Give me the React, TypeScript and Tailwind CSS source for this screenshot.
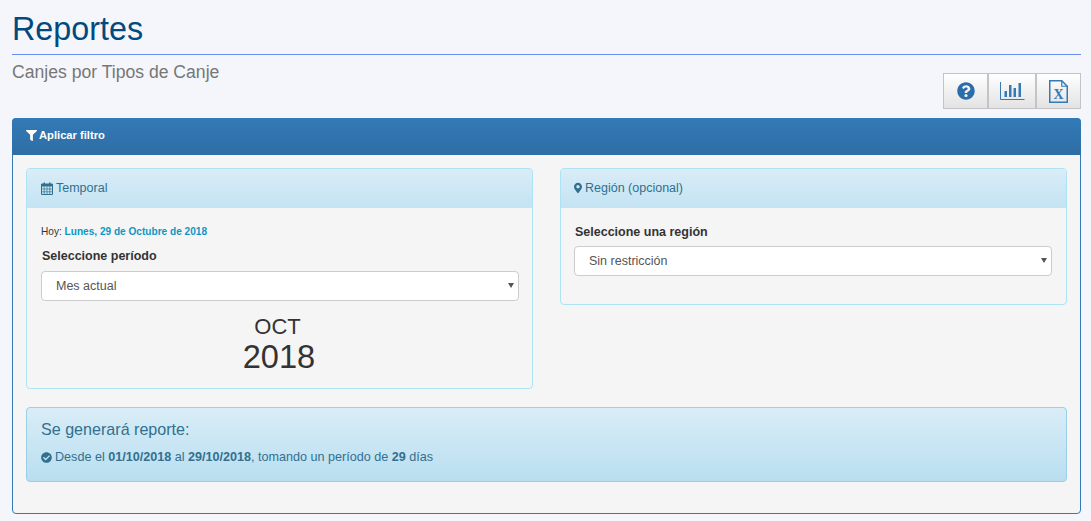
import { FaCheckCircle, FaFilter, FaMapMarkerAlt, FaQuestionCircle } from "react-icons/fa";

const ChartIcon = () => (
  <svg width="25" height="18" viewBox="0 0 25 18" fill="none" className="block">
    <path d="M0.5 0v17.5h24" stroke="#337ab7" strokeWidth="1" />
    <path d="M4.5 9h2.5v6H4.5zM9 3h2.5v12H9zM13.5 6h2.5v9h-2.5zM18.5 1h2.5v14h-2.5z" fill="#337ab7" />
  </svg>
);

const ExcelIcon = () => (
  <svg width="19" height="23" viewBox="0 0 19 23" fill="none" className="block">
    <path d="M0.75 0.75h12l5.5 5.5v16h-17.5z" stroke="#337ab7" strokeWidth="1.5" fill="none" />
    <path d="M12.75 0.75v5.5h5.5" stroke="#337ab7" strokeWidth="1.2" fill="none" />
    <text x="9.5" y="19" textAnchor="middle" fontSize="14" fontWeight="700" fontFamily="'Liberation Serif', serif" fill="#337ab7">X</text>
  </svg>
);

const CalendarIcon = () => (
  <svg width="12" height="13" viewBox="0 0 12 13" className="block">
    <path d="M0.5 2h11v10.5h-11z" fill="none" stroke="#31708f" />
    <path d="M0.5 2h11v2.5h-11z" fill="#31708f" />
    <path d="M2.5 0.5h1.5v2.5H2.5zM8 0.5h1.5v2.5H8z" fill="#31708f" />
    <path d="M0.5 7h11M0.5 9.8h11M3.2 4.5v8M6 4.5v8M8.8 4.5v8" stroke="#31708f" strokeWidth="0.7" />
  </svg>
);

const toolbarBtn =
  "flex items-center justify-center h-[36px] border border-[#c4c4c4] bg-gradient-to-b from-[#ffffff] to-[#e3e3e3]";

const subHeader =
  "flex items-center gap-[3px] h-[39px] text-[12.5px] text-[#31708f] rounded-t-[3px] bg-gradient-to-b from-[#d9edf7] to-[#c4e3f3] border-b border-[#bce8f1]";

const SelectBox = ({ value }: { value: string }) => (
  <div className="relative">
    <select
      defaultValue={value}
      className="block w-full h-[30px] pl-[14px] appearance-none text-[12.5px] text-[#555555] bg-white border border-[#cccccc] rounded-[4px] font-['Liberation_Sans',Arial,sans-serif]"
    >
      <option>{value}</option>
    </select>
    <span className="absolute right-[5px] top-[12px] border-x-[3px] border-t-[5px] border-x-transparent border-t-[#555555]" />
  </div>
);

export default function App() {
  return (
    <div className="min-h-[521px] bg-[#f4f6fb] pl-[12px] pr-[10px] font-['Liberation_Sans',Arial,sans-serif] text-[#333333]">
      <h1 className="pt-[11px] h-[54px] text-[32.3px] leading-[36px] text-[#024a7d]">Reportes</h1>
      <div className="h-px bg-[#6a8ff0]" />
      <div className="flex items-start justify-between h-[63px]">
        <h2 className="pt-[7px] text-[17.6px] leading-[20px] text-[#777777]">Canjes por Tipos de Canje</h2>
        <div className="flex mt-[18px]">
          <div className={`${toolbarBtn} w-[45px]`}>
            <FaQuestionCircle className="text-[18px] text-[#2a6da8]" />
          </div>
          <div className={`${toolbarBtn} w-[48px]`}>
            <ChartIcon />
          </div>
          <div className={`${toolbarBtn} w-[45px]`}>
            <ExcelIcon />
          </div>
        </div>
      </div>

      <div className="h-[396px] bg-[#f5f5f5] border border-[#337ab7] rounded-[4px]">
        <div className="flex items-center gap-[2px] h-[37px] pb-[2px] -mt-px -mx-px px-[14px] rounded-t-[4px] bg-gradient-to-b from-[#337ab7] to-[#2e6da4] text-[11.2px] font-bold text-white">
          <FaFilter className="text-[11px]" />
          <span>Aplicar filtro</span>
        </div>

        <div className="px-[13px] pt-[13px]">
          <div className="grid grid-cols-2 gap-[27px] items-start">
            <div className="h-[221px] border border-[#aee3f5] rounded-[4px]">
              <div className={`${subHeader} px-[14px]`}>
                <CalendarIcon />
                <span>Temporal</span>
              </div>
              <div className="pl-[14px] pr-[13px] pt-[18px]">
                <p className="text-[10.1px] leading-[12px] text-[#333333]">
                  Hoy: <span className="font-bold text-[#0e97c4]">Lunes, 29 de Octubre de 2018</span>
                </p>
                <label className="block mt-[11px] mb-[7px] pl-[1px] text-[12.5px] leading-[15px] font-bold">Seleccione período</label>
                <SelectBox value="Mes actual" />
                <div className="mt-[13px] pr-[2px] text-center">
                  <div className="pr-[3px] text-[22px] leading-[25px]">OCT</div>
                  <div className="text-[32.6px] leading-[36px]">2018</div>
                </div>
              </div>
            </div>

            <div className="h-[137px] border border-[#aee3f5] rounded-[4px]">
              <div className={`${subHeader} px-[13px]`}>
                <FaMapMarkerAlt className="w-[8px] h-[12px]" />
                <span>Región (opcional)</span>
              </div>
              <div className="pl-[13px] pr-[14px] pt-[17px]">
                <label className="block mb-[6px] pl-[1px] text-[12.5px] leading-[15px] font-bold">Seleccione una región</label>
                <SelectBox value="Sin restricción" />
              </div>
            </div>
          </div>

          <div className="mt-[18px] h-[75px] px-[14px] pt-[12px] border border-[#9acfea] rounded-[4px] bg-gradient-to-b from-[#d9edf7] to-[#b9def0] text-[#31708f]">
            <h4 className="text-[16.1px] leading-[18px]">Se generará reporte:</h4>
            <p className="flex items-center gap-[3px] mt-[11px] text-[12.6px] leading-[16px]">
              <FaCheckCircle className="text-[11px]" />
              <span>
                Desde el <b>01/10/2018</b> al <b>29/10/2018</b>, tomando un período de <b>29</b> días
              </span>
            </p>
          </div>
        </div>
      </div>
    </div>
  );
}
